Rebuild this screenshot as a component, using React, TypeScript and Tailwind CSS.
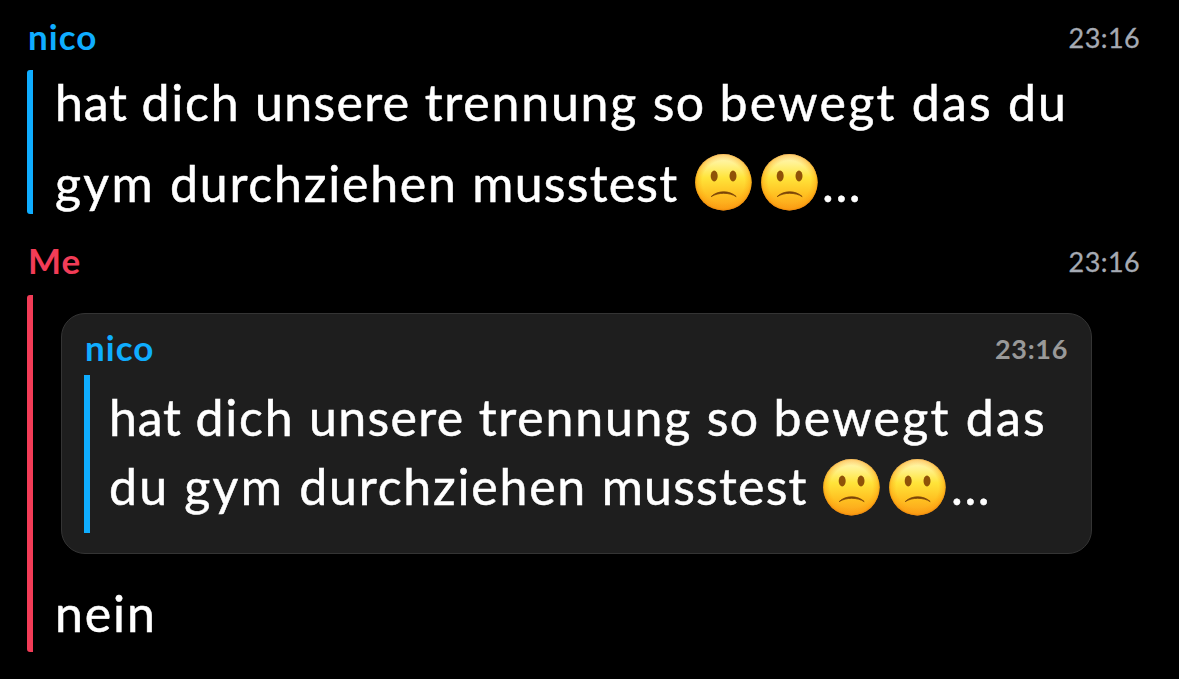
import { useId } from "react";

const TRACKING: Record<string, string> = {
  hat: "tracking-[0.8px]",
  dich: "tracking-[1.8px]",
  unsere: "tracking-[1.35px]",
  trennung: "tracking-[1.8px]",
  so: "tracking-[1.3px]",
  bewegt: "tracking-[2.3px]",
  das: "tracking-[2.2px]",
  du: "tracking-[2.2px]",
  gym: "tracking-[2.3px]",
  durchziehen: "tracking-[1.8px]",
  musstest: "tracking-[1.25px]",
  nein: "tracking-[1.9px]",
};

const Words = ({ text }: { text: string }) => (
  <>
    {text.split(" ").map((word, index) => (
      <span key={index} className={TRACKING[word]}>
        {word}{" "}
      </span>
    ))}
  </>
);

const SadFace = () => {
  const id = useId();

  return (
    <svg
      viewBox="0 0 66 58"
      className="h-[58px] w-[66px] shrink-0"
      role="img"
      aria-label="slightly frowning face"
    >
      <defs>
        <linearGradient id={`${id}-base`} x1="0" y1="0" x2="0" y2="1">
          <stop offset="0" stopColor="#fff6c0" />
          <stop offset="0.18" stopColor="#fff28c" />
          <stop offset="0.42" stopColor="#ffe43a" />
          <stop offset="0.72" stopColor="#ffc021" />
          <stop offset="1" stopColor="#fb9f1a" />
        </linearGradient>
        <radialGradient id={`${id}-rim`} cx="0.5" cy="0.49" r="0.52">
          <stop offset="0.72" stopColor="#ff9c0a" stopOpacity="0" />
          <stop offset="0.9" stopColor="#fb9a0c" stopOpacity="0.4" />
          <stop offset="1" stopColor="#e67c08" stopOpacity="0.95" />
        </radialGradient>
      </defs>
      <circle cx="33.4" cy="29.3" r="28.2" fill={`url(#${id}-base)`} />
      <circle cx="33.4" cy="29.3" r="28.2" fill={`url(#${id}-rim)`} />
      <ellipse cx="24.2" cy="23" rx="3.5" ry="5.4" fill="#8f5208" />
      <ellipse cx="43" cy="23" rx="3.5" ry="5.4" fill="#8f5208" />
      <path
        d="M21.2 43.6C27.4 37.2 40 37.2 46.2 43.6C39.2 39.2 28.2 39.2 21.2 43.6Z"
        fill="#7a4308"
        stroke="#7a4308"
        strokeWidth="0.8"
        strokeLinejoin="round"
      />
    </svg>
  );
};

const App = () => {
  return (
    <div className="h-[679px] w-[1179px] overflow-hidden bg-black pl-[27px] font-['Lato',sans-serif] text-[50px] text-white">
      {/* First message */}
      <div className="flex h-[70px] items-start justify-between pt-[14px] pr-[39px] pl-px leading-[44px]">
        <span className="text-[35px] font-bold tracking-[1px] text-[#0fadff]">
          nico
        </span>
        <span className="pt-[2px] text-[27px] tracking-[0.4px] text-[#a5aab3] [-webkit-text-stroke:0.3px]">
          23:16
        </span>
      </div>
      <div className="flex h-36 flex-col gap-4 rounded-[3px] border-l-[6px] border-[#0fadff] pl-[22px] leading-[64px] whitespace-nowrap [-webkit-text-stroke:0.5px]">
        <p className="h-16">
          <Words text="hat dich unsere trennung so bewegt das du" />
        </p>
        <p className="flex h-16 pt-px">
          <span className="w-[635px]">
            <Words text="gym durchziehen musstest" />
          </span>
          <span className="flex pt-[2px]">
            <SadFace />
            <SadFace />
          </span>
          <span className="tracking-[1.6px]">...</span>
        </p>
      </div>

      {/* Reply with the quoted message */}
      <div className="flex h-[81px] items-start justify-between pt-[24px] pr-[39px] pl-px leading-[44px]">
        <span className="text-[35px] font-bold tracking-[1px] text-[#f23c57]">
          Me
        </span>
        <span className="pt-[2px] text-[27px] tracking-[0.4px] text-[#a5aab3] [-webkit-text-stroke:0.3px]">
          23:16
        </span>
      </div>
      <div className="h-[357px] rounded-[3px] border-l-[6px] border-[#f23c57] pt-[18px] pl-[22px]">
        <div className="ml-[6px] h-[241px] w-[1031px] rounded-3xl border border-[#343434] bg-[#1e1e1e] pl-[22px]">
          <div className="flex h-[61px] items-start justify-between pt-[11px] pr-[23px] pl-px leading-[44px]">
            <span className="text-[35px] font-bold tracking-[1px] text-[#0fadff]">
              nico
            </span>
            <span className="pt-[2px] text-[27px] font-bold tracking-[0.7px] text-[#999999]">
              23:16
            </span>
          </div>
          <div className="h-[158px] border-l-[6px] border-[#0fadff] pt-[8px] pl-[19px] leading-[69px] whitespace-nowrap [-webkit-text-stroke:0.5px]">
            <p className="h-[69px]">
              <Words text="hat dich unsere trennung so bewegt das" />
            </p>
            <p className="flex h-[69px]">
              <span className="w-[709px]">
                <Words text="du gym durchziehen musstest" />
              </span>
              <span className="flex pt-[6px]">
                <SadFace />
                <SadFace />
              </span>
              <span className="pl-px tracking-[1.6px]">...</span>
            </p>
          </div>
        </div>
        <p className="mt-[27px] leading-[64px] [-webkit-text-stroke:0.5px]">
          <Words text="nein" />
        </p>
      </div>
    </div>
  );
};

export default App;
